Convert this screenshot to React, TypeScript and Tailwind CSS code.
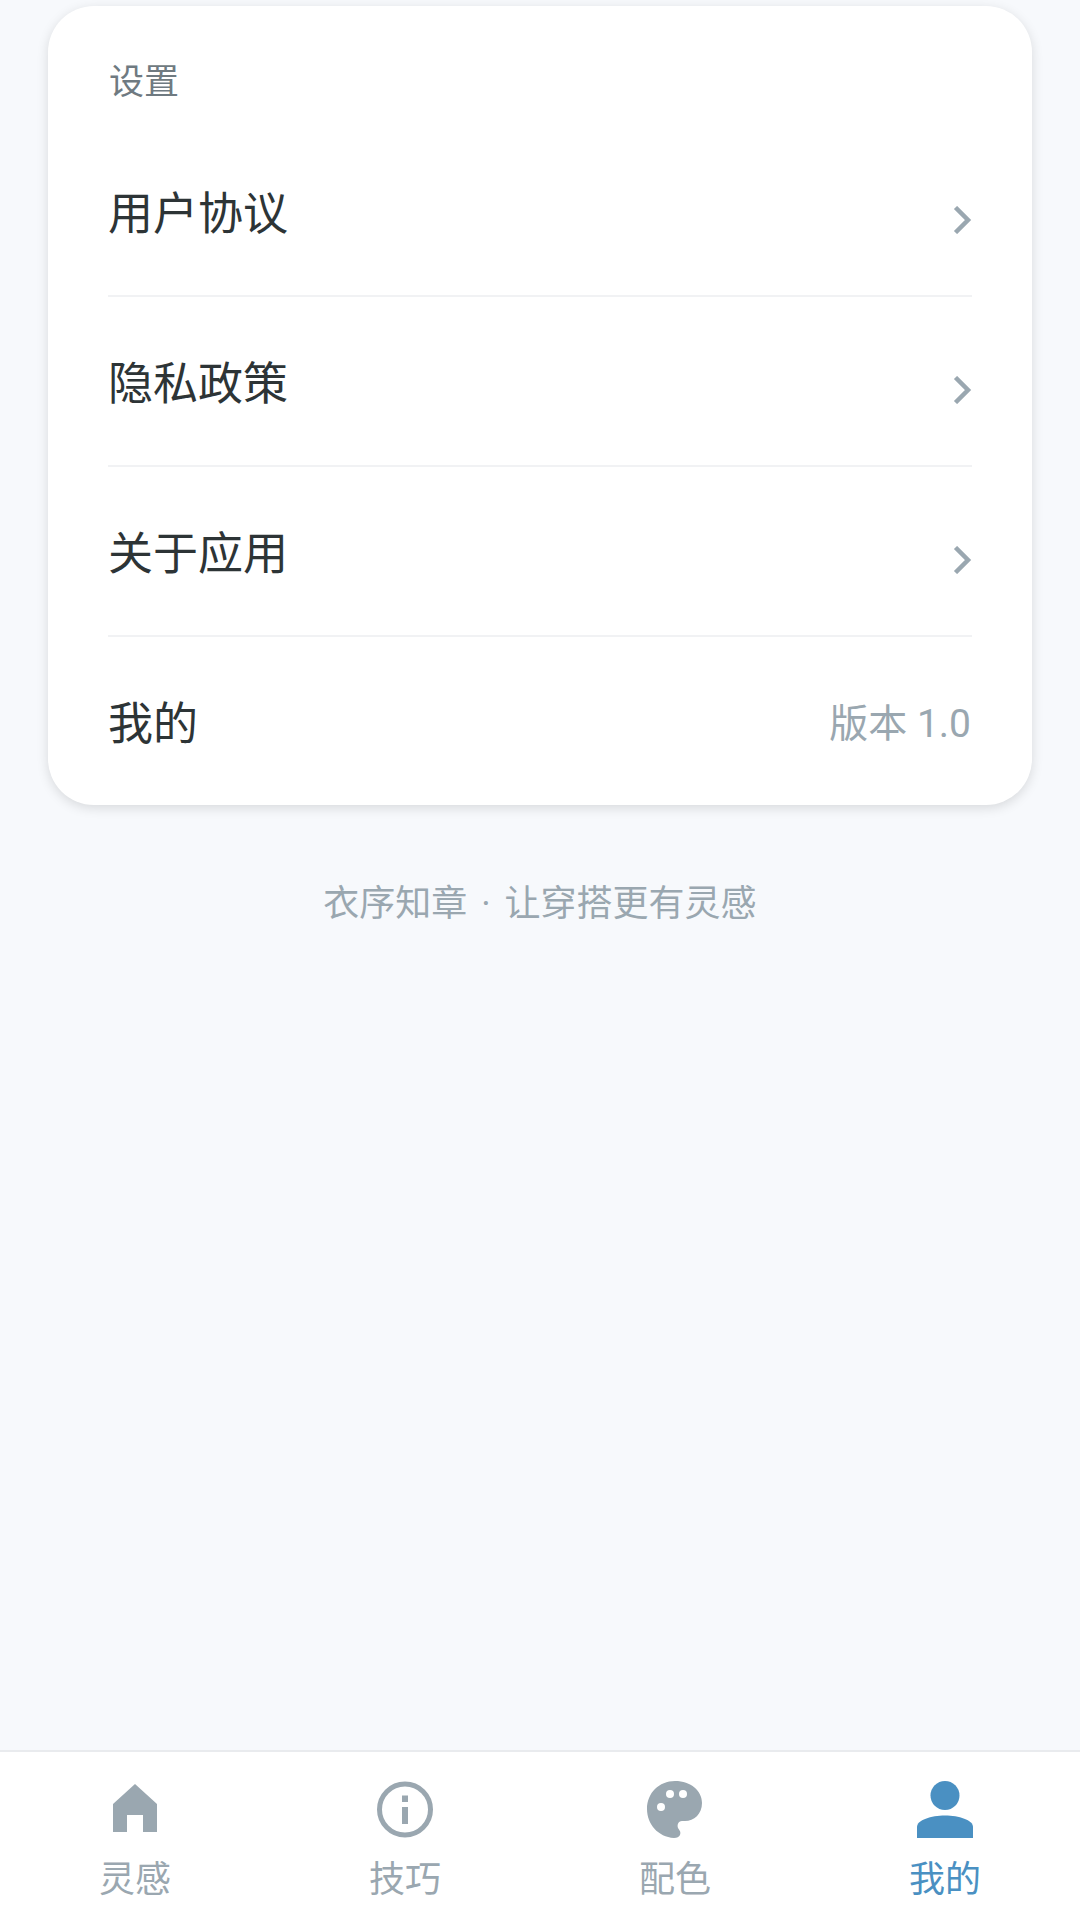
const font = { fontFamily: 'Roboto, "Noto Sans CJK SC", sans-serif' };

function Chevron() {
  return (
    <svg width="19" height="28" viewBox="0 0 19 28" fill="none" className="mt-[18px] -mr-px">
      <path d="M2.5 1.5 L15 14 L2.5 26.5" stroke="#9aa7b0" strokeWidth="4.5" />
    </svg>
  );
}

function Row({ label, last, right }: { label: string; last?: boolean; right?: React.ReactNode }) {
  return (
    <div className={`flex items-center justify-between px-px ${last ? "h-[168px]" : "h-[170px] border-b-2 border-[#f1f2f4]"}`}>
      <span className="-ml-px mt-[7px] text-[45px] leading-none text-[#2d3436]">{label}</span>
      {right ?? <Chevron />}
    </div>
  );
}

const gray = "#9aa7b0";
const blue = "#4a90c2";

function Tab({ label, color, children }: { label: string; color: string; children: React.ReactNode }) {
  return (
    <div className="flex w-[270px] flex-col items-center">
      <div className="flex h-[57px] w-[57px] items-center justify-center">{children}</div>
      <span className="mt-[22px] text-[36px] leading-[40px]" style={{ color }}>{label}</span>
    </div>
  );
}

export default function App() {
  return (
    <div style={font} className="flex h-[1920px] w-[1080px] flex-col bg-[#f7f9fc]">
      <div className="flex-1 px-[48px] pt-[6px]">
        <div className="rounded-[46px] bg-white px-[60px] shadow-[0_3px_12px_rgba(0,0,0,0.13)]">
          <div className="flex h-[121px] items-end px-px pb-[27px] text-[35px] leading-none text-[#6f7a81]">设置</div>
          <div>
            <Row label="用户协议" />
            <Row label="隐私政策" />
            <Row label="关于应用" />
            <Row
              label="我的"
              last
              right={<span className="mt-[7px] text-[39px] leading-none text-[#9aa7b0]">版本 1.0</span>}
            />
          </div>
        </div>
        <div className="mt-[75px] text-center text-[36px] leading-[48px] text-[#9aa7b0] [word-spacing:5px]">衣序知章 · 让穿搭更有灵感</div>
      </div>
      <div className="flex h-[170px] border-t-2 border-[#e9ebee] bg-white pt-[29px]">
        <Tab label="灵感" color={gray}>
          <svg width="44" height="48" viewBox="0 0 44 48" className="mb-[3px]">
            <path d="M22 0 L44 20 V48 H30 V31 H14 V48 H0 V20 Z" fill={gray} />
          </svg>
        </Tab>
        <Tab label="技巧" color={gray}>
          <svg width="56" height="57" viewBox="0 0 56 57">
            <circle cx="28" cy="28.5" r="25.5" fill="none" stroke={gray} strokeWidth="5" />
            <rect x="25" y="14.5" width="6" height="6.5" fill={gray} />
            <rect x="25" y="26" width="6" height="17" fill={gray} />
          </svg>
        </Tab>
        <Tab label="配色" color={gray}>
          <svg width="56" height="57" viewBox="0 0 56 57">
            <path d="M28 0 C44 0 55 10 55 22 C55 33 47 40 38 40 L35 40 C31 40 30 44 31 47 C33 50 34 51 33 54 C32 56 30 57 27 57 C11 56 0 43 0 28 C0 12 12 0 28 0 Z" fill={gray} />
            <circle cx="23" cy="13" r="4" fill="#fff" />
            <circle cx="36" cy="13" r="4" fill="#fff" />
            <circle cx="14" cy="26" r="4" fill="#fff" />
          </svg>
        </Tab>
        <Tab label="我的" color={blue}>
          <svg width="56" height="57" viewBox="0 0 56 57">
            <circle cx="28" cy="14.5" r="14.5" fill={blue} />
            <path d="M0 57 V46 C0 39 14 34.5 28 34.5 C42 34.5 56 39 56 46 V57 Z" fill={blue} />
          </svg>
        </Tab>
      </div>
    </div>
  );
}
